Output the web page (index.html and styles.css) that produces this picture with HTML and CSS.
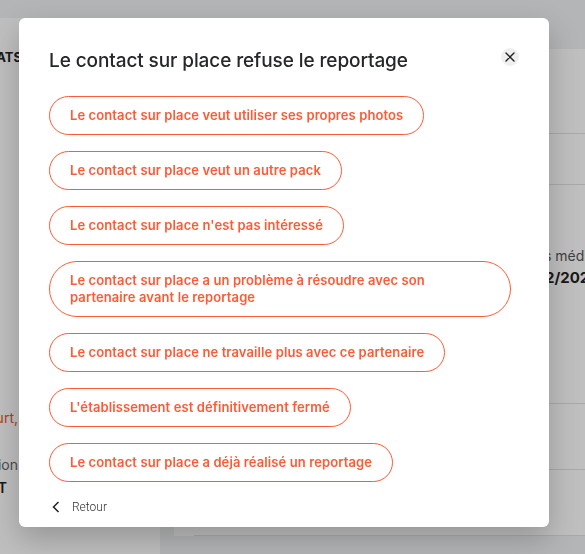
FILE: index.html
```html
<!DOCTYPE html>
<html lang="fr">
<head>
    <meta charset="UTF-8">
    <title>Refus du reportage</title>
    <meta name="viewport" content="width=device-width, initial-scale=1.0">
    <link rel="stylesheet" href="styles.css">
</head>
<body>

    <div class="page">
        <aside class="side-card">
            <div class="side-text">
                <div class="side-title">ÉTATS</div>
                <div class="side-bottom">
                    <div class="side-address">12 rue Raymond Poincaré, Courbevoie-Défense Court,</div>
                    <div class="side-label">Contact sur place / Réception</div>
                    <div class="side-name">M. DUPONT</div>
                </div>
            </div>
        </aside>

        <main class="main-card">
            <div class="row row-short"></div>
            <div class="row row-thin"></div>
            <div class="row row-tall">
                <div class="row-label">Date de livraison des médias</div>
                <div class="row-value">15/12/2023</div>
            </div>
            <div class="row row-mid"></div>
            <div class="row"></div>
        </main>
    </div>

    <div class="overlay"></div>

    <div class="modal">
        <div class="modal-head">
            <h2>Le contact sur place refuse le reportage</h2>
            <button class="close-btn" aria-label="Fermer">
                <svg width="10" height="10" viewBox="0 0 10 10">
                    <path d="M1 1L9 9M9 1L1 9" stroke="#222" stroke-width="1.4" stroke-linecap="round"/>
                </svg>
            </button>
        </div>

        <div class="choices">
            <button class="choice">Le contact sur place veut utiliser ses propres photos</button>
            <button class="choice">Le contact sur place veut un autre pack</button>
            <button class="choice">Le contact sur place n'est pas intéressé</button>
            <button class="choice">Le contact sur place a un problème à résoudre avec son partenaire avant le reportage</button>
            <button class="choice">Le contact sur place ne travaille plus avec ce partenaire</button>
            <button class="choice">L'établissement est définitivement fermé</button>
            <button class="choice">Le contact sur place a déjà réalisé un reportage</button>
        </div>

        <button class="back-link">
            <svg width="8" height="12" viewBox="0 0 8 12">
                <path d="M6.5 1L1.5 6l5 5" fill="none" stroke="#222" stroke-width="1.5"/>
            </svg>
            Retour
        </button>
    </div>

</body>
</html>
```

FILE: styles.css
```css
body {
    margin: 0;
    height: 554px;
    overflow: hidden;
    background: #f1f2f3;
    font-family: Inter, 'Noto Sans', sans-serif;
}
.page {
    display: grid;
    grid-template-columns: 160px 1fr;
    gap: 14px;
    height: 100%;
}
.side-card {
    background: white;
    margin-top: 18px;
    overflow: hidden;
}
.side-text {
    width: 20px;
    height: 100%;
    display: flex;
    flex-direction: column;
    justify-content: space-between;
    align-items: flex-end;
    padding: 31px 0 66px 0;
    box-sizing: border-box;
    white-space: nowrap;
}
.side-title {
    font-size: 13px;
    font-weight: 700;
    color: #222;
    margin-right: -2px;
}
.side-bottom {
    display: flex;
    flex-direction: column;
    align-items: flex-end;
    font-size: 14px;
}
.side-address {
    color: #e9572f;
    margin-bottom: 30px;
    margin-right: 2px;
}
.side-label {
    color: #666;
    margin-bottom: 6px;
    margin-right: 2px;
}
.side-name {
    color: #222;
    font-weight: 600;
    margin-right: 13px;
}
.main-card {
    background: white;
    margin-top: 49px;
    margin-bottom: 26px;
    padding-left: 20px;
}
.row {
    border-bottom: 1px solid #e2e2e2;
    height: 65px;
}
.row-short {
    height: 84px;
}
.row-thin {
    height: 50px;
}
.row-tall {
    height: 219px;
    padding-top: 62px;
    box-sizing: border-box;
    text-align: right;
    white-space: nowrap;
    overflow: hidden;
    direction: rtl;
}
.row-mid {
    height: 65px;
}
.row-label {
    font-size: 14px;
    color: #555;
    direction: ltr;
    margin-right: -18px;
}
.row-value {
    font-size: 15px;
    font-weight: 700;
    color: #222;
    margin-top: 4px;
    direction: ltr;
    margin-right: -14px;
}
.overlay {
    position: fixed;
    inset: 0;
    background: rgba(0, 0, 0, 0.25);
}
.modal {
    position: absolute;
    left: 19px;
    top: 18px;
    width: 530px;
    height: 509px;
    box-sizing: border-box;
    background: white;
    border-radius: 6px;
    box-shadow: 0px 12px 30px rgba(0, 0, 0, 0.22);
    padding: 30px 30px 0 30px;
}
.modal-head {
    display: flex;
    justify-content: space-between;
    align-items: flex-start;
}
.modal-head h2 {
    margin: 0;
    font-size: 19px;
    font-weight: 500;
    letter-spacing: -0.1px;
    line-height: 26px;
    color: #25272a;
}
.close-btn {
    width: 18px;
    height: 18px;
    border: none;
    border-radius: 50%;
    background: #efefef;
    padding: 0;
    margin: 0 0 0 0;
    display: flex;
    align-items: center;
    justify-content: center;
    cursor: pointer;
}
.choices {
    margin-top: 22px;
    display: flex;
    flex-direction: column;
    align-items: flex-start;
    gap: 16px;
}
.choice {
    max-width: 462px;
    padding: 10px 20px;
    border: 1px solid #ff5a36;
    border-radius: 28px;
    background: white;
    color: #ff5a36;
    font-family: Inter, 'Noto Sans', sans-serif;
    font-size: 13px;
    font-weight: 600;
    letter-spacing: 0.1px;
    line-height: 17px;
    text-align: left;
    cursor: pointer;
}
.back-link {
    margin-top: 18px;
    display: flex;
    align-items: center;
    gap: 12px;
    border: none;
    background: none;
    padding: 0 0 0 3px;
    font-family: Roboto, sans-serif;
    font-size: 12px;
    font-weight: 300;
    color: #333;
    cursor: pointer;
}
```
